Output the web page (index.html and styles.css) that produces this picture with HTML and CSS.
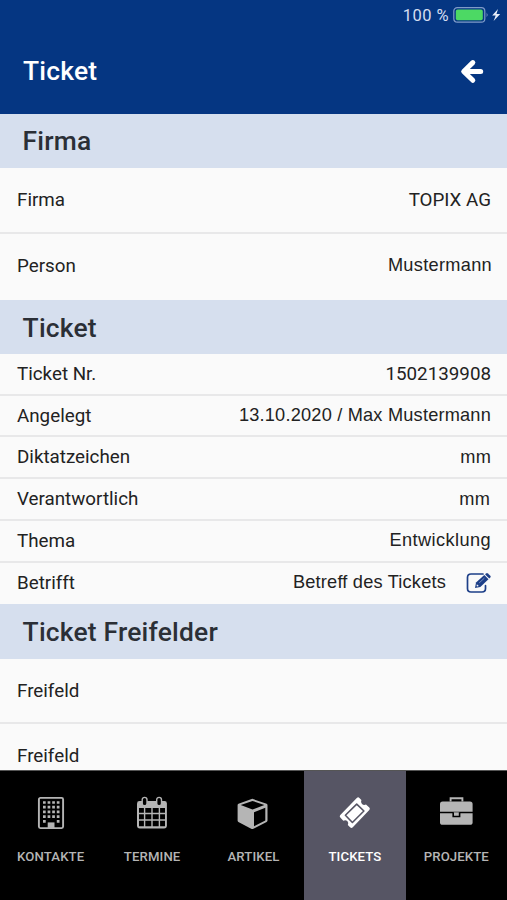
FILE: index.html
```
<!DOCTYPE html>
<html lang="de">
<head>
<meta charset="utf-8">
<title>Ticket</title>
<link rel="stylesheet" href="styles.css">
</head>
<body>
<div class="app">
  <header class="header">
    <div class="status">
      <span class="percent">100 %</span>
      <svg class="battery" width="50" height="18" viewBox="0 0 50 18">
        <rect x=".8" y="1.6" width="31" height="14.6" rx="3.5" fill="none" stroke="#7f9bc8" stroke-width="1.2"/>
        <rect x="2.8" y="3.6" width="27" height="10.6" rx="1.8" fill="#4cd964"/>
        <path d="M33.7 6.5q1.8 2.4 0 4.8z" fill="#8fa8d0"/>
        <path d="M45 2.900L39.200 9.500h3.500L40.600 15 47.200 7.900h-3.700z" fill="#e9eef8"/>
      </svg>
    </div>
    <div class="titlebar">
      <h1 class="title">Ticket</h1>
      <svg class="back" width="24" height="25" viewBox="0 0 24 25" fill="none" stroke="#fff" stroke-width="5" stroke-linecap="round" stroke-linejoin="round">
        <path d="M12.8 3.6L3.7 12.5l9.1 8.800M4.500 12.500h16.200"/>
      </svg>
    </div>
  </header>
  <main class="content">
    <h2 class="band">Firma</h2>
    <div class="row tall"><span class="label">Firma</span><span class="value">TOPIX AG</span></div>
    <div class="row tall last"><span class="label">Person</span><span class="value arial person">Mustermann</span></div>
    <h2 class="band">Ticket</h2>
    <div class="row"><span class="label">Ticket Nr.</span><span class="value">1502139908</span></div>
    <div class="row"><span class="label">Angelegt</span><span class="value arial">13.10.2020 / Max Mustermann</span></div>
    <div class="row"><span class="label">Diktatzeichen</span><span class="value arial">mm</span></div>
    <div class="row"><span class="label">Verantwortlich</span><span class="value arial owner">mm</span></div>
    <div class="row"><span class="label">Thema</span><span class="value arial topic">Entwicklung</span></div>
    <div class="row last"><span class="label">Betrifft</span><span class="value arial subject">Betreff des Tickets
      <svg class="edit" width="26" height="22" viewBox="0 0 26 22">
        <path d="M17 2H5Q1.500 2 1.500 5.500v11Q1.500 20 5 20h11q3.500 0 3.500-3.500v-2.800" fill="none" stroke="#1d3f88" stroke-width="1.700" stroke-linecap="round"/>
        <path d="M9 16l1-5.500L18.300 3l4.200 4.200-8.200 7.700z" fill="#1d3f88"/>
        <path d="M19.100 2.400l1-.9q.9-.8 1.800 0l2.400 2.300q.9.900 0 1.800l-1 .9z" fill="#1d3f88"/>
        <path d="M13.200 10.900l5.200-4.800" stroke="#8ea3cc" stroke-width=".8"/>
        <path d="M10.900 12.200l1.900 1.900-1.700.4-.5-.6z" fill="#fafafa"/>
      </svg></span></div>
    <h2 class="band">Ticket Freifelder</h2>
    <div class="row tall"><span class="label">Freifeld</span></div>
    <div class="row tall last"><span class="label">Freifeld</span></div>
  </main>
  <nav class="tabs">
    <a class="tab">
      <svg class="icon" width="34" height="34" viewBox="0 0 34 34">
        <rect x="4.900" y="1.900" width="24.200" height="30.200" rx="1.500" fill="none" stroke="#b5b5b5" stroke-width="1.900"/>
        <path d="M9 6.500h17M9 11.200h17M9 15.900h17M9 20.600h17" stroke="#b5b5b5" stroke-width="2.700" stroke-dasharray="2.700 1.900"/>
        <path d="M9 25.300h2.700M22.800 25.300h2.700" stroke="#b5b5b5" stroke-width="2.700"/>
        <path d="M13.700 26.400h6.800v5.600h-6.800z" fill="#b5b5b5"/>
      </svg>
      <span class="caption">KONTAKTE</span>
    </a>
    <a class="tab">
      <svg class="icon" width="34" height="34" viewBox="0 0 34 34">
        <path d="M4.500 5h25q2.400 0 2.400 2.400v22.200q0 2.900-2.900 2.900H4.900Q2 32.500 2 29.600V7.400Q2 5 4.500 5z" fill="#b5b5b5"/>
        <path d="M4 12h4.900v4.800H4zm6.300 0h6v4.800h-6zm7.400 0h6v4.800h-6zm7.400 0H30v4.800h-4.900zM4 18.300h4.900v5H4zm6.300 0h6v5h-6zm7.400 0h6v5h-6zm7.400 0H30v5h-4.900zM4 24.800h4.900v5.500H4zm6.300 0h6v5.500h-6zm7.400 0h6v5.500h-6zm7.400 0H30v5.500h-4.900z" fill="#000"/>
        <rect x="7.200" y="1.400" width="4.800" height="8.400" rx="2.400" fill="#000" stroke="#b5b5b5" stroke-width="1.400"/>
        <rect x="21.700" y="1.400" width="4.800" height="8.400" rx="2.400" fill="#000" stroke="#b5b5b5" stroke-width="1.400"/>
      </svg>
      <span class="caption">TERMINE</span>
    </a>
    <a class="tab">
      <svg class="icon" width="34" height="34" viewBox="0 0 34 34">
        <path d="M15.300 2.800L1.500 7.800Q.6 8.200.6 9.200V24.600q0 .9.800 1.400l12.800 6.800q1.100.6 2.200 0l13.200-6.800q.9-.5.900-1.400V9.200q0-1-.9-1.400z" fill="#b5b5b5"/>
        <path d="M15.500 4.900L3.700 9l11.800 4.500L27.400 9zM17 16.300l11.300-4.600v12.800L17 30.200z" fill="#000"/>
      </svg>
      <span class="caption">ARTIKEL</span>
    </a>
    <a class="tab active">
      <svg class="icon" width="34" height="34" viewBox="0 0 34 34">
        <path d="M18.800 1.900q1.400-1.400 2.600 0l2 2.200q-1.100 2.300.6 4 1.900 1.500 4 .4l3.300 3.100q1.200 1.200 0 2.500L14.800 31.300q-1.400 1.300-2.700 0l-2.300-2.200q1.200-2.200-.5-4-1.700-1.600-4-.4L2.300 21.600q-1.200-1.200 0-2.500z" fill="#fff"/>
        <path d="M18.700 8.100l7.200 6.900-11.500 11.500-7-7.200z" fill="none" stroke="#565564" stroke-width="1.600" stroke-linejoin="round"/>
      </svg>
      <span class="caption">TICKETS</span>
    </a>
    <a class="tab">
      <svg class="icon" width="34" height="34" viewBox="0 0 34 34">
        <path d="M11.600 5.600V2.300h11.800v3.300" fill="none" stroke="#b5b5b5" stroke-width="1.900"/>
        <rect x="1" y="5.400" width="32.600" height="23.400" rx="2.600" fill="#b5b5b5"/>
        <path d="M1 16.500h33" stroke="#000" stroke-width="1.700"/>
        <path d="M14.200 16.300v4.200h6.400v-4.200" fill="#b5b5b5" stroke="#000" stroke-width="1.600"/>
      </svg>
      <span class="caption">PROJEKTE</span>
    </a>
  </nav>
</div>
</body>
</html>
```
FILE: styles.css
```
* { box-sizing: border-box; }
body { margin: 0; font-family: Roboto, "Liberation Sans", sans-serif; }
.app { width: 507px; height: 900px; display: flex; flex-direction: column; overflow: hidden; background: #fafafa; }

.header { height: 114px; flex: none; background: #053682; color: #fff; display: flex; flex-direction: column; }
.status { height: 30px; padding-right: 4px; display: flex; align-items: center; justify-content: flex-end; gap: 4px; }
.percent { font-size: 16.500px; letter-spacing: .45px; color: #d5def0; }
.titlebar { height: 84px; padding: 0 23px; display: flex; align-items: flex-start; justify-content: space-between; }
.title { margin: 0; padding-top: 24px; font-size: 26.400px; line-height: 34px; font-weight: 500; letter-spacing: .2px; }
.back { margin-top: 29px; }

.content { flex: 1; min-height: 0; overflow: hidden; color: #222; }
.band { height: 54.400px; margin: 0; padding-left: 22.600px; font-size: 26.400px; line-height: 56px; font-weight: 500; letter-spacing: .2px; color: #2b2f36; background: #d6dfee; }
.band:first-child { line-height: 55px; }
.row { height: 41.750px; padding: 0 16px 0 17px; display: flex; align-items: center; justify-content: space-between; border-bottom: 2px solid #e8e8e9; font-size: 18.800px; }
.row.tall { height: 65.600px; }
.row.last { border-bottom-color: #fafafa; }
.arial { font-family: "Liberation Sans", Arial, sans-serif; font-size: 18.200px; letter-spacing: .2px; }
.value { display: flex; align-items: center; white-space: pre; }
.person { margin-right: -1px; letter-spacing: .3px; }
.owner { margin-right: 1px; }
.topic { letter-spacing: .4px; }
.subject { gap: 20px; margin-right: -1px; white-space: normal; }

.tabs { height: 130px; flex: none; display: flex; background: #000; border-top: 1px solid #555; }
.tab { flex: 1; padding-top: 25px; display: flex; flex-direction: column; align-items: center; color: #b5b5b5; }
.tab.active { background: #565564; color: #fff; }
.caption { margin-top: 19px; font-size: 13.200px; line-height: 16px; font-weight: 500; letter-spacing: .1px; }
.icon { overflow: visible; }
```
